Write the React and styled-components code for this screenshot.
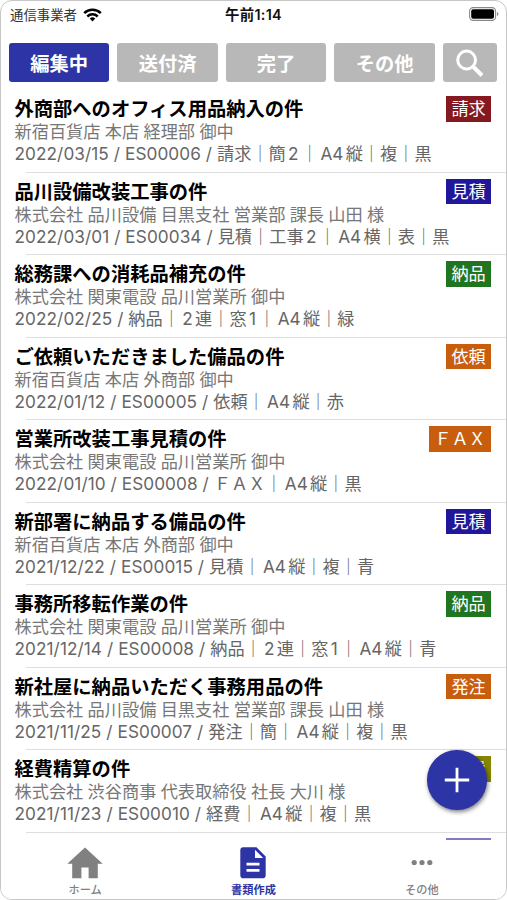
import React from 'react';
import styled, { createGlobalStyle } from 'styled-components';

const GlobalStyle = createGlobalStyle`
  * {
    box-sizing: border-box;
  }
  body {
    margin: 0;
    background: #fff;
    font-family: Inter, "Noto Sans CJK JP", sans-serif;
    text-autospace: no-autospace;
  }
`;

const Screen = styled.div`
  width: 507px;
  height: 900px;
  position: relative;
  display: flex;
  flex-direction: column;
  overflow: hidden;
  background: #fff;
  border: 1px solid #c6c6c6;
  border-radius: 12px;
`;

const StatusBar = styled.header`
  height: 42px;
  flex: none;
  padding: 4px 7px 0 9px;
  display: grid;
  grid-template-columns: 1fr auto 1fr;
  align-items: start;
  line-height: 20px;
`;

const Carrier = styled.div`
  display: flex;
  align-items: center;
  gap: 6px;
  font-size: 13.4px;
  color: #333;
`;

const Clock = styled.div`
  padding-right: 2px;
  font-size: 14.4px;
  font-weight: 600;
  letter-spacing: 0.3px;
  color: #111;
`;

const BatteryBox = styled.div`
  height: 18px;
  display: flex;
  align-items: center;
  justify-content: flex-end;
`;

const Tabs = styled.div`
  flex: none;
  display: flex;
  gap: 8.3px;
  padding: 0 9px 0 8px;
  height: 39px;
`;

const Tab = styled.button`
  width: ${(p) => (p.$icon ? '54px' : '100.2px')};
  height: 39px;
  padding: 0;
  display: flex;
  align-items: center;
  justify-content: center;
  border: none;
  border-radius: 3px;
  background: ${(p) => (p.$active ? '#2d34a5' : '#b8b8b8')};
  color: #fff;
  font-family: inherit;
  font-size: 19.3px;
  font-weight: 700;
`;

const List = styled.ul`
  flex: 1;
  min-height: 0;
  margin: 0;
  padding: 8px 0 0;
  overflow: hidden;
  list-style: none;
`;

const Row = styled.li`
  height: 82.5px;
  padding: 6px 15px 0 13.5px;
  display: flex;
  justify-content: space-between;
  align-items: flex-start;
  background: linear-gradient(#dedede, #dedede) 25px 100% / 100% 1px no-repeat;
`;

const Texts = styled.div`
  flex: 1;
  min-width: 0;
  white-space: nowrap;
`;

const Title = styled.div`
  padding-top: 1px;
  font-size: 19.3px;
  font-weight: 700;
  line-height: 24px;
  color: #000;
`;

const Client = styled.div`
  font-size: 17.2px;
  line-height: 22px;
  word-spacing: -0.5px;
  color: #777;
`;

const Meta = styled.div`
  font-size: 17.2px;
  line-height: 22px;
  color: #666;
`;

const Head = styled.span`
  letter-spacing: 0.08px;
`;

// latin run that touches japanese text
const Latin = styled.span`
  margin: 0 2.3px;
`;

const Tag = styled.span`
  flex: none;
  height: 25.5px;
  padding: 0 5.2px;
  line-height: 25px;
  font-size: 17.2px;
  color: #fff;
  background: ${(p) => p.$color};
`;

const TagEdge = styled.div`
  width: 44.8px;
  height: 25.5px;
  margin-top: -0.5px;
  background: #8579c4;
`;

const Fab = styled.button`
  position: absolute;
  left: 426px;
  top: 749px;
  width: 59.5px;
  height: 59.5px;
  padding: 0;
  display: flex;
  align-items: center;
  justify-content: center;
  border: none;
  border-radius: 50%;
  background: #2d34a5;
  box-shadow: 1px 2px 4px rgba(0, 0, 0, 0.5);
`;

const Nav = styled.nav`
  flex: none;
  height: 59px;
  padding-top: 7px;
  display: grid;
  grid-template-columns: repeat(3, 1fr);
  background: #fff;
`;

const NavItem = styled.div`
  display: flex;
  flex-direction: column;
  align-items: center;
  gap: 4px;
  color: ${(p) => (p.$active ? '#2d34a5' : '#808080')};
  font-size: 11.2px;
  font-weight: ${(p) => (p.$active ? 700 : 500)};
  line-height: 15px;
`;

const colors = {
  請求: '#86191f',
  見積: '#21179a',
  納品: '#217521',
  依頼: '#c95d0e',
  ＦＡＸ: '#c95d0e',
  発注: '#c95d0e',
  経費: '#858600',
};

const items = [
  { title: '外商部へのオフィス用品納入の件', client: '新宿百貨店 本店 経理部 御中', meta: '2022/03/15 / ES00006 / 請求｜簡2｜A4縦｜複｜黒', tag: '請求' },
  { title: '品川設備改装工事の件', client: '株式会社 品川設備 目黒支社 営業部 課長 山田 様', meta: '2022/03/01 / ES00034 / 見積｜工事2｜A4横｜表｜黒', tag: '見積' },
  { title: '総務課への消耗品補充の件', client: '株式会社 関東電設 品川営業所 御中', meta: '2022/02/25 / 納品｜2連｜窓1｜A4縦｜緑', tag: '納品' },
  { title: 'ご依頼いただきました備品の件', client: '新宿百貨店 本店 外商部 御中', meta: '2022/01/12 / ES00005 / 依頼｜A4縦｜赤', tag: '依頼' },
  { title: '営業所改装工事見積の件', client: '株式会社 関東電設 品川営業所 御中', meta: '2022/01/10 / ES00008 / ＦＡＸ｜A4縦｜黒', tag: 'ＦＡＸ' },
  { title: '新部署に納品する備品の件', client: '新宿百貨店 本店 外商部 御中', meta: '2021/12/22 / ES00015 / 見積｜A4縦｜複｜青', tag: '見積' },
  { title: '事務所移転作業の件', client: '株式会社 関東電設 品川営業所 御中', meta: '2021/12/14 / ES00008 / 納品｜2連｜窓1｜A4縦｜青', tag: '納品' },
  { title: '新社屋に納品いただく事務用品の件', client: '株式会社 品川設備 目黒支社 営業部 課長 山田 様', meta: '2021/11/25 / ES00007 / 発注｜簡｜A4縦｜複｜黒', tag: '発注' },
  { title: '経費精算の件', client: '株式会社 渋谷商事 代表取締役 社長 大川 様', meta: '2021/11/23 / ES00010 / 経費｜A4縦｜複｜黒', tag: '経費' },
];

const MetaLine = ({ text }) => {
  const cut = text.lastIndexOf('/ ') + 2;
  const parts = text.slice(cut).split(/([A-Z0-9]+)/);
  return (
    <Meta>
      <Head>{text.slice(0, cut)}</Head>
      {parts.map((part, i) => (i % 2 ? <Latin key={i}>{part}</Latin> : part))}
    </Meta>
  );
};

const WifiIcon = () => (
  <svg width="19" height="14" viewBox="0 0 19 14" fill="none" stroke="#000" strokeWidth="2.5">
    <path d="M1.2 5.2a11.8 11.8 0 0 1 16.6 0" />
    <path d="M4.3 8.5a7.4 7.4 0 0 1 10.4 0" />
    <path d="M9.5 13.4l-2.8-2.9a4 4 0 0 1 5.6 0z" fill="#000" stroke="none" />
  </svg>
);

const BatteryIcon = () => (
  <svg width="30" height="14" viewBox="0 0 30 14">
    <rect x="0.6" y="0.6" width="26" height="12.8" rx="3.6" fill="none" stroke="#888" strokeWidth="1.1" />
    <rect x="2.2" y="2.2" width="22.8" height="9.6" rx="2" fill="#000" />
    <path d="M28 5v4q1.4-.6 1.4-2T28 5z" fill="#888" />
  </svg>
);

const SearchIcon = () => (
  <svg width="28" height="28" viewBox="0 0 28 28" fill="none" stroke="#fff">
    <circle cx="10.6" cy="11" r="8.9" strokeWidth="3" />
    <path d="M17 17.5l9 9" strokeWidth="4" />
  </svg>
);

const HomeIcon = () => (
  <svg width="36" height="32" viewBox="0 0 36 32" fill="currentColor">
    <path d="M18 .5L.3 16.8h4.9v14.4h9.2V20.4h7.2v10.8h9.2V16.8h4.9z" />
  </svg>
);

const DocIcon = () => (
  <svg width="26" height="32" viewBox="0 0 26 32">
    <path d="M3.2.3h13.3L25.7 9.6v18.6a3.1 3.1 0 0 1-3.1 3.1H3.4A3.1 3.1 0 0 1 .3 28.2V3.4A3.1 3.1 0 0 1 3.2.3z" fill="currentColor" />
    <path d="M15 2.7v8.2h8.2zM6.5 15.8h13v2.8h-13zM6.5 22h13v2.8h-13z" fill="#fff" />
  </svg>
);

const MoreIcon = () => (
  <svg width="22" height="32" viewBox="0 0 22 32" fill="currentColor">
    <circle cx="3.2" cy="15.5" r="2.6" />
    <circle cx="11" cy="15.5" r="2.6" />
    <circle cx="18.8" cy="15.5" r="2.6" />
  </svg>
);

const App = () => {
  return (
    <>
      <GlobalStyle />
      <Screen>
        <StatusBar>
          <Carrier>
            通信事業者
            <WifiIcon />
          </Carrier>
          <Clock>午前1:14</Clock>
          <BatteryBox>
            <BatteryIcon />
          </BatteryBox>
        </StatusBar>
        <Tabs>
          <Tab $active>編集中</Tab>
          <Tab>送付済</Tab>
          <Tab>完了</Tab>
          <Tab>その他</Tab>
          <Tab $icon>
            <SearchIcon />
          </Tab>
        </Tabs>
        <List>
          {items.map((item) => (
            <Row key={item.meta}>
              <Texts>
                <Title>{item.title}</Title>
                <Client>{item.client}</Client>
                <MetaLine text={item.meta} />
              </Texts>
              <Tag $color={colors[item.tag]}>{item.tag}</Tag>
            </Row>
          ))}
          {/* next row, only the top edge of its tag is in view */}
          <Row>
            <Texts />
            <TagEdge />
          </Row>
        </List>
        <Nav>
          <NavItem>
            <HomeIcon />
            ホーム
          </NavItem>
          <NavItem $active>
            <DocIcon />
            書類作成
          </NavItem>
          <NavItem>
            <MoreIcon />
            その他
          </NavItem>
        </Nav>
        <Fab>
          <svg width="26" height="26" viewBox="0 0 26 26" stroke="#fff" strokeWidth="2.8">
            <path d="M13 .8v24.4M.8 13h24.4" />
          </svg>
        </Fab>
      </Screen>
    </>
  );
};

export default App;
